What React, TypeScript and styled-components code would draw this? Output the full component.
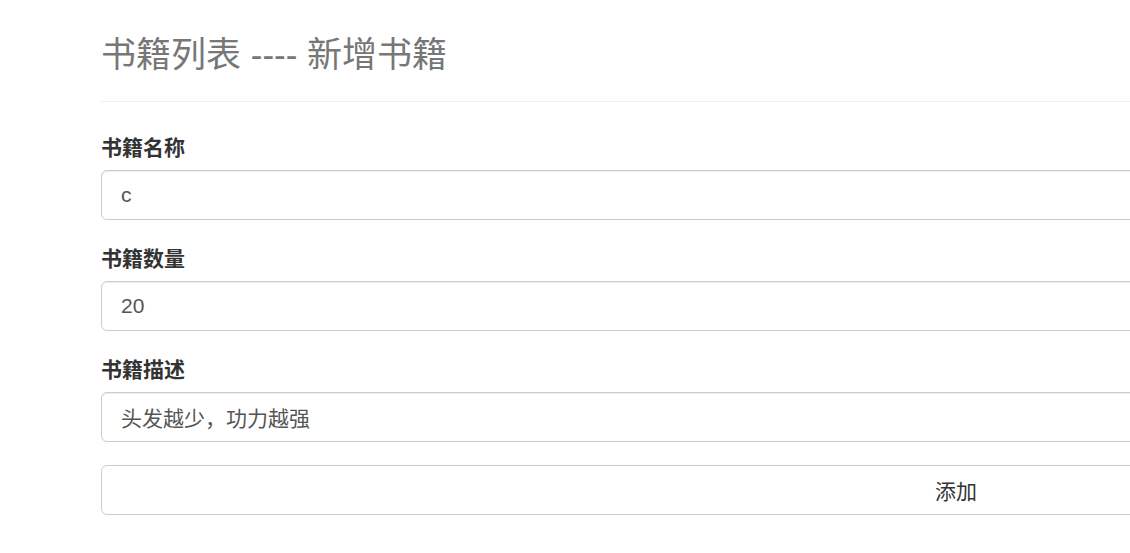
import React from "react";
import styled, { createGlobalStyle } from "styled-components";

const GlobalStyle = createGlobalStyle`
    html, body {
        margin: 0;
        padding: 0;
        background: #fff;
        overflow: hidden;
    }
    body {
        font-family: "Liberation Sans", Arial, "Noto Sans CJK SC", sans-serif;
        color: #333;
    }
    * {
        box-sizing: border-box;
    }
`;

const Page = styled.div`
    padding-left: 101px;
    width: 1811px;
`;

const PageHeader = styled.div`
    padding: 34px 0 26px;
    border-bottom: 1px solid #eee;
`;

const Title = styled.h1`
    margin: 0;
    font-size: 35px;
    line-height: 41px;
    font-weight: 400;
    color: #777;
`;

const Form = styled.form`
    padding-top: 34px;
`;

const FormGroup = styled.div`
    & + & {
        margin-top: 27px;
    }
`;

const Label = styled.label`
    display: block;
    font-size: 21px;
    line-height: 24px;
    font-weight: 700;
    color: #333;
    margin-bottom: 10px;
`;

const Input = styled.input`
    display: block;
    width: 100%;
    height: 50px;
    padding: 0 19px;
    font-family: inherit;
    font-size: 21px;
    color: #555;
    background: #fff;
    border: 1px solid #ccc;
    border-radius: 6px;
    box-shadow: inset 0 1px 1px rgba(0, 0, 0, 0.075);
    outline: none;
`;

const SubmitButton = styled.button`
    display: block;
    width: 100%;
    height: 50px;
    margin-top: 23px;
    font-family: inherit;
    font-size: 21px;
    color: #333;
    background: #fff;
    border: 1px solid #ccc;
    border-radius: 6px;
    cursor: pointer;
`;

const fields = [
    { label: "书籍名称", value: "c" },
    { label: "书籍数量", value: "20" },
    { label: "书籍描述", value: "头发越少，功力越强" },
];

export default function App() {
    return (
        <>
            <GlobalStyle />
            <Page>
                <PageHeader>
                    <Title>书籍列表 ---- 新增书籍</Title>
                </PageHeader>
                <Form onSubmit={(e) => e.preventDefault()}>
                    {fields.map((field) => (
                        <FormGroup key={field.label}>
                            <Label>{field.label}</Label>
                            <Input type="text" defaultValue={field.value} />
                        </FormGroup>
                    ))}
                    <SubmitButton type="submit">添加</SubmitButton>
                </Form>
            </Page>
        </>
    );
}
